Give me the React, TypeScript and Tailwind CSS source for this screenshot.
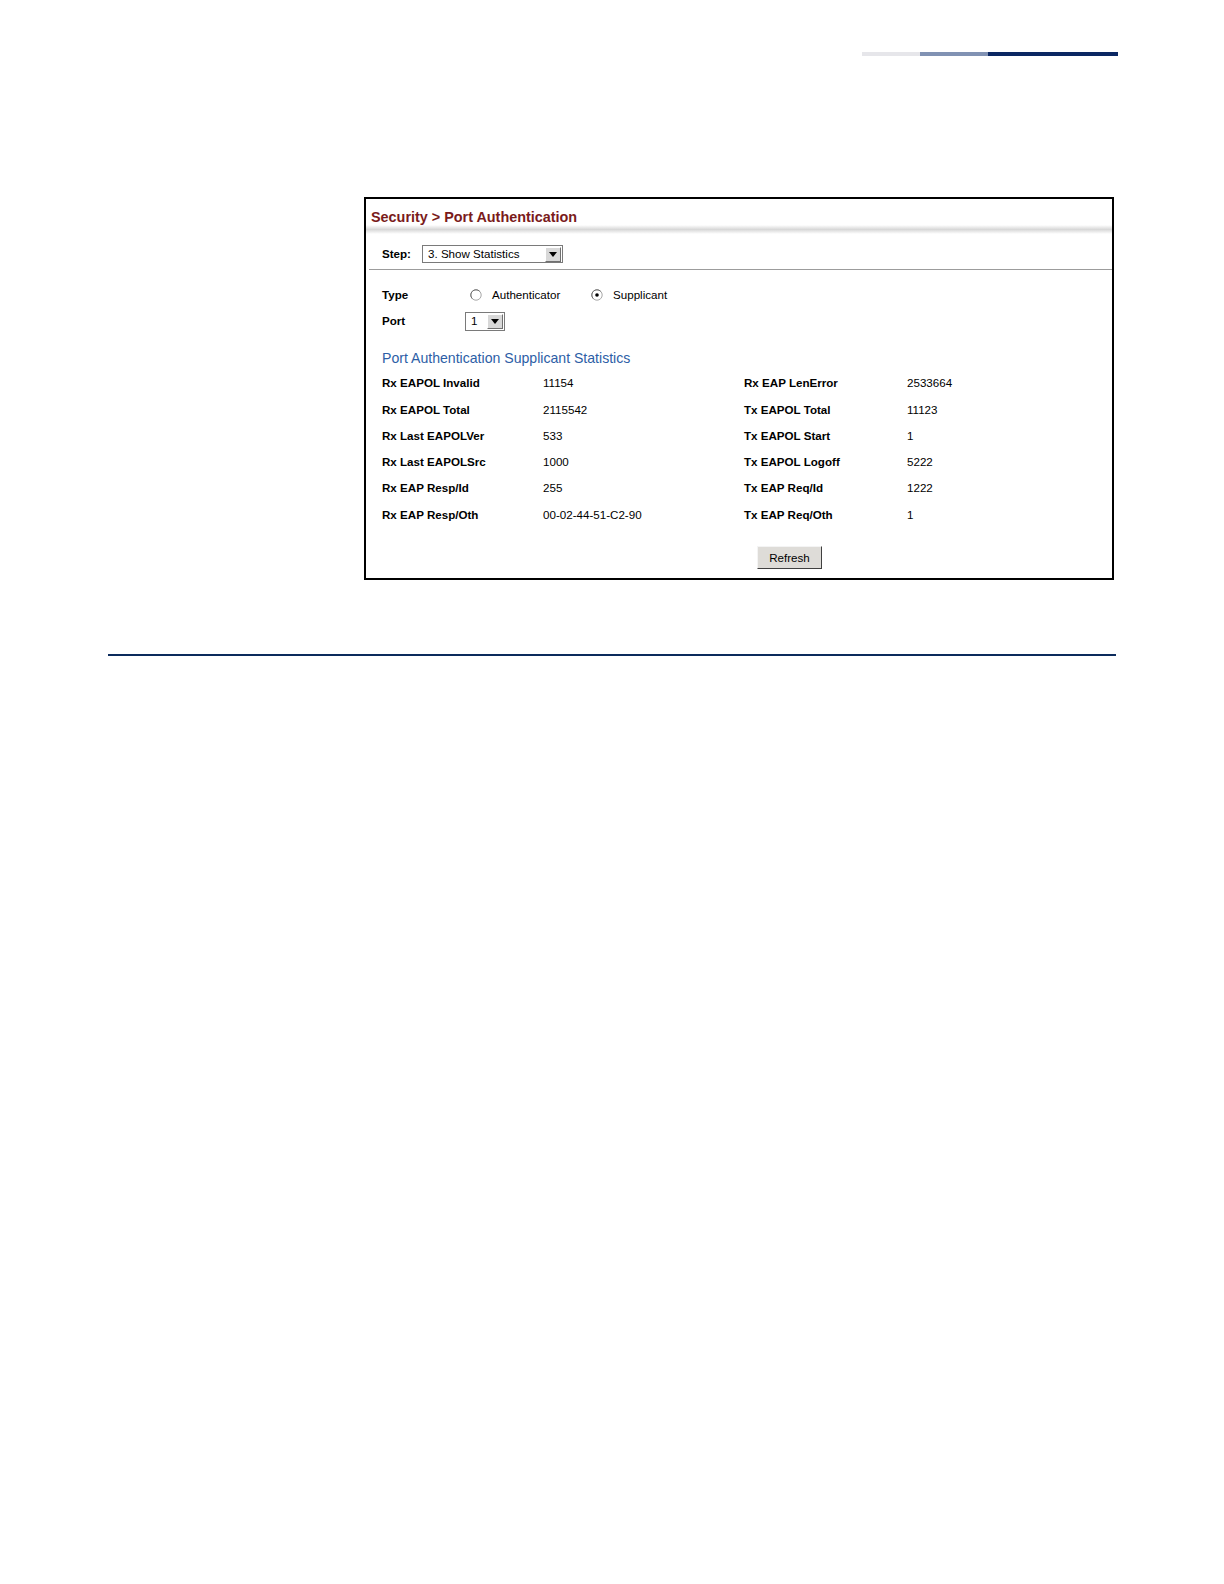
import React from 'react'

const rows: [string, string, string, string][] = [
  ['Rx EAPOL Invalid', '11154', 'Rx EAP LenError', '2533664'],
  ['Rx EAPOL Total', '2115542', 'Tx EAPOL Total', '11123'],
  ['Rx Last EAPOLVer', '533', 'Tx EAPOL Start', '1'],
  ['Rx Last EAPOLSrc', '1000', 'Tx EAPOL Logoff', '5222'],
  ['Rx EAP Resp/Id', '255', 'Tx EAP Req/Id', '1222'],
  ['Rx EAP Resp/Oth', '00-02-44-51-C2-90', 'Tx EAP Req/Oth', '1'],
]

function Arrow() {
  return (
    <span className="w-[16px] h-[15px] bg-[#d8d8d8] border border-t-white border-l-white border-b-[#707070] border-r-[#707070] flex items-center justify-center">
      <svg width="8" height="5" viewBox="0 0 8 5"><path d="M0 0h8L4 5z" fill="#000" /></svg>
    </span>
  )
}

function Radio({ checked }: { checked?: boolean }) {
  return (
    <svg width="12" height="12" viewBox="0 0 12 12">
      <circle cx="6" cy="6" r="5.2" fill="#fff" stroke="#a8a8a8" strokeWidth="1" />
      <path d="M2.3 9.7A5.2 5.2 0 0 1 9.7 2.3" fill="none" stroke="#707070" strokeWidth="1" />
      {checked && <circle cx="6" cy="6" r="1.8" fill="#000" />}
    </svg>
  )
}

export default function App() {
  return (
    <div className="w-full h-screen overflow-hidden bg-white font-['Liberation_Sans',Arial,sans-serif] text-black">
      <div className="pt-[52px] pr-[106px] flex justify-end">
        <div className="w-[58px] h-[4px] bg-[#e6e6ea]" />
        <div className="w-[68px] h-[4px] bg-[#8192b3]" />
        <div className="w-[130px] h-[4px] bg-[#0b2763]" />
      </div>

      <div className="mt-[141px] ml-[364px] w-[750px] h-[383px] border-2 border-black flex flex-col">
        <div className="pl-[5px] pt-[10px] h-[26px] text-[14.4px] leading-[16px] font-bold text-[#7a1b1b]">
          Security &gt; Port Authentication
        </div>
        <div className="h-[9px] bg-gradient-to-b from-white via-[#d8d8d8] to-white" />

        <div className="mt-[11px] pl-[16px] flex items-center h-[18px]">
          <span className="text-[11.6px] font-bold w-[40px]">Step:</span>
          <div className="w-[141px] h-[18px] border border-[#7a7a7a] bg-white flex items-center justify-between pl-[5px] pr-px">
            <span className="text-[11.6px]">3. Show Statistics</span>
            <Arrow />
          </div>
        </div>

        <div className="mt-[6px] ml-[3px] h-px bg-[#9c9c9c]" />

        <div className="mt-[15px] pl-[16px] flex items-center h-[20px] text-[11.6px]">
          <span className="font-bold w-[88px]">Type</span>
          <Radio />
          <span className="ml-[10px] w-[99px]">Authenticator</span>
          <Radio checked />
          <span className="ml-[10px]">Supplicant</span>
        </div>

        <div className="mt-[6px] pl-[16px] flex items-center h-[20px] text-[11.6px]">
          <span className="font-bold w-[83px]">Port</span>
          <div className="w-[40px] h-[19px] border border-[#7a7a7a] bg-white flex items-center justify-between pl-[5px] pr-px">
            <span>1</span>
            <Arrow />
          </div>
        </div>

        <div className="mt-[18px] pl-[16px] h-[18px] text-[14.1px] leading-[18px] text-[#2d5ea6]">
          Port Authentication Supplicant Statistics
        </div>

        <div className="mt-[3px] pl-[16px] flex flex-col">
          {rows.map(r => (
            <div key={r[0]} className="h-[26.25px] flex items-center text-[11.6px]">
              <span className="w-[161px] font-bold">{r[0]}</span>
              <span className="w-[201px]">{r[1]}</span>
              <span className="w-[163px] font-bold">{r[2]}</span>
              <span>{r[3]}</span>
            </div>
          ))}
        </div>

        <div className="mt-[17px] ml-[391px]">
          <button className="w-[65px] h-[23px] bg-[#dedcd8] border border-t-[#f4f4f4] border-l-[#f4f4f4] border-b-[#404040] border-r-[#404040] text-[11.6px] text-black">
            Refresh
          </button>
        </div>
      </div>

      <div className="mt-[74px] ml-[108px] w-[1008px] h-[2px] bg-[#0c2b5c]" />
    </div>
  )
}
